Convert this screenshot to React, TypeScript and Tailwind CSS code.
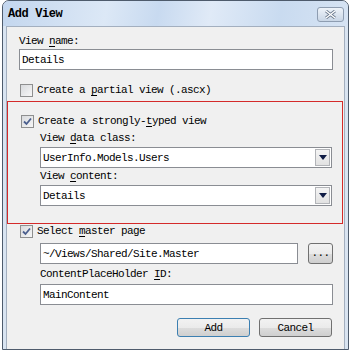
import React from "react";

const mono = "font-['Liberation_Mono',monospace] text-[11px] tracking-[-0.6px] leading-[14px] text-black";

const Checkbox: React.FC<{ checked?: boolean }> = ({ checked }) => (
    <span className="w-[13px] h-[13px] border border-[#8e8f8f] bg-gradient-to-br from-[#d8dadd] to-[#f7f7f7] flex items-center justify-center shrink-0">
        {checked && (
            <svg width="9" height="9" viewBox="0 0 9 9">
                <path d="M1 4.5 L3.5 7 L8 1.5" fill="none" stroke="#4b5f8e" strokeWidth="1.8" />
            </svg>
        )}
    </span>
);

const Label: React.FC<{ pre: string; key_: string; post: string; className?: string }> = ({ pre, key_, post, className }) => (
    <div className={`h-[14px] ${mono} ${className ?? ""}`}>
        {pre}
        <u className="underline-offset-2">{key_}</u>
        {post}
    </div>
);

const TextBox: React.FC<{ value: string; className?: string }> = ({ value, className }) => (
    <div className={`h-[21px] border border-[#8a8d93] bg-white pl-[2px] flex items-center ${mono} ${className ?? ""}`}>
        {value}
    </div>
);

const Select: React.FC<{ value: string }> = ({ value }) => (
    <div className={`h-[21px] border border-[#8a8d93] bg-white pl-[2px] pr-[1px] flex items-center ${mono}`}>
        <span className="flex-1">{value}</span>
        <span className="w-[15px] h-[17px] border border-[#b2b4b8] bg-gradient-to-b from-[#f4f4f4] to-[#e2e2e2] flex items-center justify-center">
            <svg width="8" height="5" viewBox="0 0 8 5">
                <path d="M0 0 H8 L4 5 Z" fill="#0f1c45" />
            </svg>
        </span>
    </div>
);

const Button: React.FC<{ children: React.ReactNode; primary?: boolean; className?: string }> = ({ children, primary, className }) => (
    <div
        className={`h-[19px] rounded-[3px] border ${primary ? "border-[#3c7fb1]" : "border-[#707070]"} bg-[linear-gradient(#f2f2f2_0%,#ebebeb_50%,#dddddd_51%,#cfcfcf_100%)] flex items-center justify-center ${mono} ${className ?? ""}`}
    >
        {children}
    </div>
);

export default function App() {
    return (
        <div className="w-[355px] h-[357px] bg-white">
            <div className="ml-[2px] w-[347px] h-[350px] border border-[#4e5b6c] rounded-t-[7px] bg-[#d9e4f1] flex flex-col overflow-hidden">
                <div className="h-[25px] shrink-0 bg-[linear-gradient(100deg,#c3d6ee_0%,#dce8f6_30%,#c8daf0_45%,#e0eaf7_60%,#c9dbf0_80%,#d6e3f3_100%)] flex items-center pl-[5px] pr-[4px]">
                    <span className="font-['Liberation_Mono',monospace] font-bold text-[12px] tracking-[-0.4px] text-black flex-1">Add View</span>
                    <span className="w-[27px] h-[15px] mt-[1px] rounded-[3px] border border-[#8e9db1] bg-gradient-to-b from-[#eef3f9] to-[#c9d6e6] flex items-center justify-center">
                        <svg width="13" height="9" viewBox="0 0 13 9">
                            <path d="M2 1 L11 8 M11 1 L2 8" stroke="#6d7b8f" strokeWidth="3" />
                            <path d="M2 1 L11 8 M11 1 L2 8" stroke="#ffffff" strokeWidth="1.3" />
                        </svg>
                    </span>
                </div>
                <div className="flex-1 mx-[3px] border-x border-t border-[#a3afbf] bg-[#f0f0f0] flex flex-col">
                    <div className="pl-[12px] pr-[11px]">
                        <Label pre="View " key_="n" post="ame:" className="mt-[7px]" />
                        <TextBox value="Details" className="mt-[1px]" />
                        <div className={`mt-[13px] h-[14px] flex items-center gap-[4px] pl-[1px] ${mono}`}>
                            <Checkbox />
                            <span>
                                Create a <u className="underline-offset-2">p</u>artial view (.ascx)
                            </span>
                        </div>
                    </div>

                    <div className="mt-[4px] mr-[1px] border border-[#d42a2a] pl-[13px] pr-[10px] pb-[17px]">
                        <div className={`mt-[12px] h-[14px] flex items-center gap-[4px] ${mono}`}>
                            <Checkbox checked />
                            <span>
                                Create a strongly-<u className="underline-offset-2">t</u>yped view
                            </span>
                        </div>
                        <div className="ml-[19px]">
                            <Label pre="View " key_="d" post="ata class:" className="mt-[3px]" />
                            <div className="mt-[2px]">
                                <Select value="UserInfo.Models.Users" />
                            </div>
                            <Label pre="View " key_="c" post="ontent:" className="mt-[1px]" />
                            <div className="mt-[2px]">
                                <Select value="Details" />
                            </div>
                        </div>
                    </div>

                    <div className="pl-[13px] pr-[11px]">
                        <div className={`mt-[0px] h-[14px] flex items-center gap-[4px] ${mono}`}>
                            <Checkbox checked />
                            <span>
                                Select <u className="underline-offset-2">m</u>aster page
                            </span>
                        </div>
                        <div className="ml-[20px]">
                            <div className="mt-[5px] flex gap-[10px]">
                                <TextBox value="~/Views/Shared/Site.Master" className="flex-1" />
                                <Button className="w-[25px] h-[21px] items-end pb-[3px] text-[8px]">...</Button>
                            </div>
                            <Label pre="ContentPlaceHolder " key_="I" post="D:" className="mt-[3px]" />
                            <TextBox value="MainContent" className="mt-[3px] h-[20px]" />
                            <div className="mt-[13px] flex justify-end gap-[9px]">
                                <Button primary className="w-[73px]">Add</Button>
                                <Button className="w-[73px] mr-[1px]">Cancel</Button>
                            </div>
                        </div>
                    </div>
                </div>
            </div>
        </div>
    );
}
